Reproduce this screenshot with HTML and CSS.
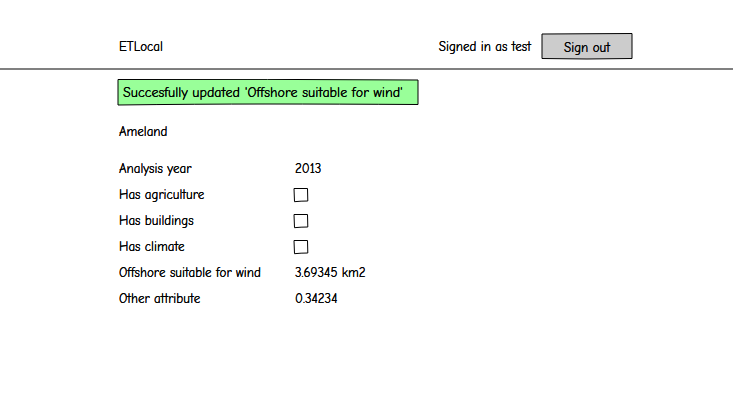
FILE: index.html
```html
<!DOCTYPE html>
<html lang="en">
<head>
<meta charset="utf-8">
<meta name="viewport" content="width=device-width, initial-scale=1">
<title>ETLocal</title>
<link rel="stylesheet" href="styles.css">
</head>
<body>
<header class="topbar">
  <span class="brand">ETLocal</span>
  <div class="session">
    <span>Signed in as test</span>
    <button class="sketch signout" type="button">
      <svg class="outline" viewBox="0 0 92 27" preserveAspectRatio="none" aria-hidden="true"><path d="M1 1L91 .5L91 25.5Q46 26.5 1 25.5Z" fill="#ccc"/></svg>
      <span class="sketch-text">Sign out</span>
    </button>
  </div>
</header>
<main class="content">
  <p class="sketch notice" role="status">
    <svg class="outline" viewBox="0 0 302 27" preserveAspectRatio="none" aria-hidden="true"><path d="M1 .5Q150 0 301 1L301 25.5Q220 25 150 25T1 26Z" fill="#9f9"/></svg>
    <span class="sketch-text">Succesfully updated 'Offshore suitable for wind'</span>
  </p>
  <h1 class="title">Ameland</h1>
  <div class="attributes">
    <span>Analysis year</span><span>2013</span>
    <label for="agriculture">Has agriculture</label><span class="tick"><input type="checkbox" id="agriculture"><svg class="outline" viewBox="0 0 16 16" aria-hidden="true"><path d="M1 1.5L14.5 1.5L14.8 14Q8 14 1.5 14.7Z" fill="none"/></svg></span>
    <label for="buildings">Has buildings</label><span class="tick"><input type="checkbox" id="buildings"><svg class="outline" viewBox="0 0 16 16" aria-hidden="true"><path d="M1 1.5L14.5 1.5L14.8 14Q8 14 1.5 14.7Z" fill="none"/></svg></span>
    <label for="climate">Has climate</label><span class="tick"><input type="checkbox" id="climate"><svg class="outline" viewBox="0 0 16 16" aria-hidden="true"><path d="M1 1.5L14.5 1.5L14.8 14Q8 14 1.5 14.7Z" fill="none"/></svg></span>
    <span>Offshore suitable for wind</span><span>3.69345 km2</span>
    <span>Other attribute</span><span>0.34234</span>
  </div>
</main>
</body>
</html>
```
FILE: styles.css
```css
* { box-sizing: border-box; }
body {
  margin: 0;
  background: #fff;
  color: #000;
  font: 13px/20px "Comic Sans MS", "Comic Neue", "Open Sans", sans-serif;
  text-shadow: 0 0 #000;
}
body, button, .notice {
  font-variant-ligatures: none;
  font-kerning: none;
}
.topbar {
  display: flex;
  justify-content: space-between;
  align-items: center;
  padding: 33px 100px 8px 119px;
  border-bottom: 2px solid #808080;
}
.session {
  display: flex;
  align-items: center;
  gap: 10px;
}
.sketch {
  position: relative;
  margin: 0;
  padding: 0;
  border: 0;
  background: none;
  font-family: inherit;
  font-size: 13px;
  line-height: 20px;
  color: inherit;
  text-shadow: inherit;
}
.signout {
  width: 92px;
  height: 27px;
  padding-top: 2px;
}
.outline {
  position: absolute;
  inset: 0;
  width: 100%;
  height: 100%;
  pointer-events: none;
}
.outline path {
  stroke: #000;
  stroke-width: 1;
  stroke-linejoin: round;
}
.sketch-text { position: relative; }
.content { padding: 9px 100px 0 119px; }
.notice {
  width: fit-content;
  min-width: 302px;
  margin-left: -2px;
  padding: 4px 6px 3px;
  font-size: 14px;
}
.title {
  margin: 16px 0;
  font-size: 13px;
  font-weight: normal;
}
.attributes {
  display: grid;
  grid-template-columns: 176px 1fr;
  grid-auto-rows: 26px;
  align-items: center;
  margin-top: -2px;
}
.tick {
  position: relative;
  width: 16px;
  height: 16px;
  margin-left: -2px;
}
.tick input {
  display: block;
  appearance: none;
  width: 16px;
  height: 16px;
  margin: 0;
  background: #fff;
}
.tick input:checked { background: #9f9; }
```
